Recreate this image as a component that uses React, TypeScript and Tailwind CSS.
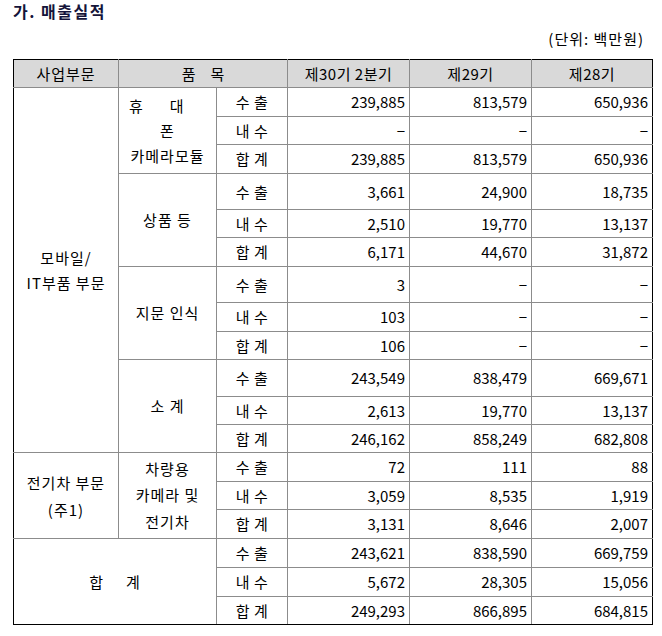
import React from "react";

const B = "border border-[#8c8c8c]";

type Row = { h: number; label: string; v: [string, string, string] };

const D = "−";

const rows: Row[] = [
  { h: 29, label: "수 출", v: ["239,885", "813,579", "650,936"] },
  { h: 28, label: "내 수", v: [D, D, D] },
  { h: 29, label: "합 계", v: ["239,885", "813,579", "650,936"] },
  { h: 36, label: "수 출", v: ["3,661", "24,900", "18,735"] },
  { h: 28, label: "내 수", v: ["2,510", "19,770", "13,137"] },
  { h: 29, label: "합 계", v: ["6,171", "44,670", "31,872"] },
  { h: 36, label: "수 출", v: ["3", D, D] },
  { h: 29, label: "내 수", v: ["103", D, D] },
  { h: 28, label: "합 계", v: ["106", D, D] },
  { h: 37, label: "수 출", v: ["243,549", "838,479", "669,671"] },
  { h: 28, label: "내 수", v: ["2,613", "19,770", "13,137"] },
  { h: 28, label: "합 계", v: ["246,162", "858,249", "682,808"] },
  { h: 29, label: "수 출", v: ["72", "111", "88"] },
  { h: 28, label: "내 수", v: ["3,059", "8,535", "1,919"] },
  { h: 29, label: "합 계", v: ["3,131", "8,646", "2,007"] },
  { h: 29, label: "수 출", v: ["243,621", "838,590", "669,759"] },
  { h: 29, label: "내 수", v: ["5,672", "28,305", "15,056"] },
  { h: 28, label: "합 계", v: ["249,293", "866,895", "684,815"] },
];

function lead(i: number) {
  const mid = `${B} text-center align-middle tracking-[1px]`;
  if (i === 0)
    return (
      <>
        <td rowSpan={12} className={`${mid} border-l-black leading-[25px]`}>
          모바일/
          <br />
          IT부품 부문
        </td>
        <td rowSpan={3} className={`${mid} leading-[25px]`}>
          <div className="text-left pl-[10px]">
            휴<span className="inline-block w-[26px]"></span>대
          </div>
          <div>폰</div>
          <div>카메라모듈</div>
        </td>
      </>
    );
  if (i === 3)
    return (
      <td rowSpan={3} className={mid}>
        상품 등
      </td>
    );
  if (i === 6)
    return (
      <td rowSpan={3} className={mid}>
        지문 인식
      </td>
    );
  if (i === 9)
    return (
      <td rowSpan={3} className={mid}>
        소 계
      </td>
    );
  if (i === 12)
    return (
      <>
        <td rowSpan={3} className={`${mid} border-l-black leading-[27px]`}>
          전기차 부문
          <br />
          (주1)
        </td>
        <td rowSpan={3} className={`${mid} leading-[26.5px]`}>
          차량용
          <br />
          카메라 및
          <br />
          전기차
        </td>
      </>
    );
  if (i === 15)
    return (
      <td
        rowSpan={3}
        colSpan={2}
        className={`${mid} border-l-black border-b-black`}
      >
        합<span className="inline-block w-[22px]"></span>계
      </td>
    );
  return null;
}

export default function App() {
  return (
    <div className="w-[662px] h-[636px] bg-white text-black font-['Noto_Sans_CJK_KR',sans-serif] text-[15px] px-[13px]">
      <div className="h-[22px] leading-[22px] text-[16px] font-bold tracking-[1.5px] text-[#14143a]">
        가. 매출실적
      </div>
      <div className="mt-[7px] h-[20px] leading-[20px] text-right pr-[5px] tracking-[1px]">
        (단위: 백만원)
      </div>
      <table className="mt-[10px] w-[639px] table-fixed border-collapse leading-[18px]">
        <colgroup>
          <col className="w-[105px]" />
          <col className="w-[98px]" />
          <col className="w-[71px]" />
          <col className="w-[122px]" />
          <col className="w-[122px]" />
          <col className="w-[121px]" />
        </colgroup>
        <thead>
          <tr className="h-[28px] bg-[#d9d9d9]">
            <th className={`${B} border-t-black border-l-black font-normal text-center tracking-[1px]`}>
              사업부문
            </th>
            <th colSpan={2} className={`${B} border-t-black font-normal text-center`}>
              품<span className="inline-block w-[15px]"></span>목
            </th>
            <th className={`${B} border-t-black font-normal text-center tracking-[0.5px]`}>
              제30기 2분기
            </th>
            <th className={`${B} border-t-black font-normal text-center tracking-[0.5px]`}>
              제29기
            </th>
            <th className={`${B} border-t-black border-r-black font-normal text-center tracking-[0.5px]`}>
              제28기
            </th>
          </tr>
        </thead>
        <tbody>
          {rows.map((r, i) => {
            const bottom = i === rows.length - 1;
            return (
              <tr key={i} style={{ height: r.h }}>
                {lead(i)}
                <td
                  className={`${B} text-center align-middle tracking-[0.5px] ${
                    bottom ? "border-b-black" : ""
                  }`}
                >
                  {r.label}
                </td>
                {r.v.map((v, j) => (
                  <td
                    key={j}
                    className={`${B} text-right align-middle pr-[4px] ${
                      j === 2 ? "border-r-black" : ""
                    } ${bottom ? "border-b-black" : ""}`}
                  >
                    {v}
                  </td>
                ))}
              </tr>
            );
          })}
        </tbody>
      </table>
    </div>
  );
}
